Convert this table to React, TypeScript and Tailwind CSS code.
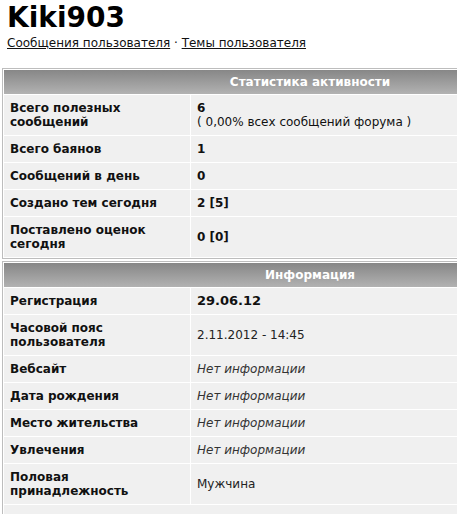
import React from "react";

type Row = { label: React.ReactNode; value: React.ReactNode };

const statRows: Row[] = [
  {
    label: (
      <>
        Всего полезных
        <br />
        сообщений
      </>
    ),
    value: (
      <div>
        <div className="font-bold">6</div>
        <div>( 0,00% всех сообщений форума )</div>
      </div>
    ),
  },
  { label: "Всего баянов", value: <span className="font-bold">1</span> },
  { label: "Сообщений в день", value: <span className="font-bold">0</span> },
  { label: "Создано тем сегодня", value: <span className="font-bold">2 [5]</span> },
  {
    label: (
      <>
        Поставлено оценок
        <br />
        сегодня
      </>
    ),
    value: <span className="font-bold">0 [0]</span>,
  },
];

const none = <span className="italic text-[#333]">Нет информации</span>;

const infoRows: Row[] = [
  { label: "Регистрация", value: <span className="font-bold text-[13px]">29.06.12</span> },
  {
    label: (
      <>
        Часовой пояс
        <br />
        пользователя
      </>
    ),
    value: <span className="text-[#222]">2.11.2012 - 14:45</span>,
  },
  { label: "Вебсайт", value: none },
  { label: "Дата рождения", value: none },
  { label: "Место жительства", value: none },
  { label: "Увлечения", value: none },
  {
    label: (
      <>
        Половая
        <br />
        принадлежность
      </>
    ),
    value: <span className="text-[#222]">Мужчина</span>,
  },
];

function Panel({ title, rows, extra }: { title: string; rows: Row[]; extra?: boolean }) {
  return (
    <div className="w-[616px] border border-[#bdbdbd] bg-white p-px">
      <div className="flex flex-col gap-px">
        <div className="h-[24px] flex items-center justify-center bg-gradient-to-b from-[#878787] to-[#b2b2b2] text-white font-bold text-[12px]">
          {title}
        </div>
        {rows.map((r, i) => (
          <div key={i} className="grid grid-cols-[186px_1fr] gap-px">
            <div className="bg-[#f0f0f0] px-[6px] py-[6px] font-bold text-[12px] leading-[14px] text-[#111] flex items-center">
              <div>{r.label}</div>
            </div>
            <div className="bg-[#f0f0f0] px-[6px] py-[6px] text-[12px] leading-[14px] text-[#111] flex items-center">
              {r.value}
            </div>
          </div>
        ))}
        {extra && <div className="h-[30px] bg-[#f0f0f0]" />}
      </div>
    </div>
  );
}

export default function App() {
  return (
    <div
      className="w-[457px] h-[514px] overflow-hidden bg-white text-black"
      style={{ fontFamily: '"DejaVu Sans", Verdana, sans-serif' }}
    >
      <div className="pl-[7px] pt-[3px]">
        <h1 className="text-[28px] font-bold leading-[30px]">Kiki903</h1>
        <div className="text-[12px] leading-[14px] mt-[3px] text-[#111]">
          <a href="#" className="underline">Сообщения пользователя</a>
          <span> · </span>
          <a href="#" className="underline">Темы пользователя</a>
        </div>
      </div>
      <div className="pl-[2px] mt-[18px] flex flex-col gap-[2px]">
        <Panel title="Статистика активности" rows={statRows} />
        <Panel title="Информация" rows={infoRows} extra />
      </div>
    </div>
  );
}
